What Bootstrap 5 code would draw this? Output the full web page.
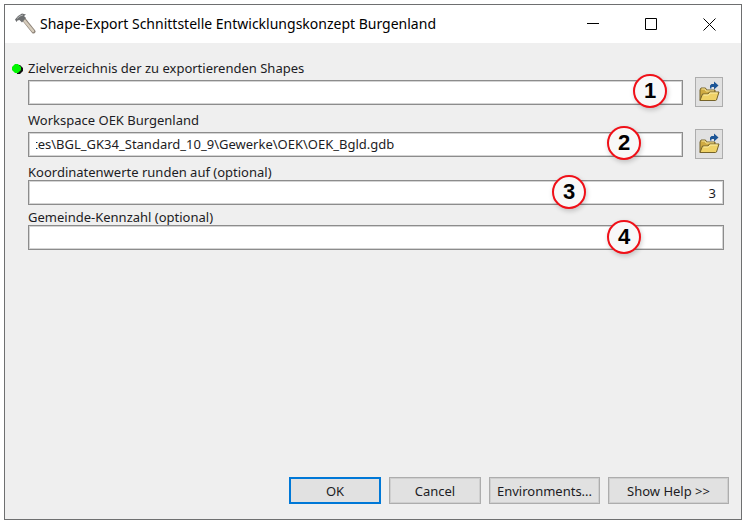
<!DOCTYPE html>
<html lang="de">
<head>
<meta charset="utf-8">
<meta name="viewport" content="width=device-width, initial-scale=1">
<title>Shape-Export Schnittstelle Entwicklungskonzept Burgenland</title>
<link href="https://cdn.jsdelivr.net/npm/bootstrap@5.3.0/dist/css/bootstrap.min.css" rel="stylesheet">
<style>
  body { font: 13px/18px "Noto Sans", sans-serif; color: #1c1c24; padding: 4px 2px 4px 4px; background: #fff; }
  .dialog { border: 1px solid #6e6f70; background: #efefef; }
  .titlebar { min-height: 38px; padding: 0 3px 0 9px; background: #fff; }
  .titlebar h1 { font: 14px/20px "Noto Sans", sans-serif; color: #000; }
  .win-btn { width: 58px; height: 38px; padding: 0; border: 0; border-radius: 0; }
  .win-btn svg { display: block; margin: 0 auto; }
  .form-area { padding: 16px 17px 0 23px; }
  .tight-label { line-height: 16px; padding-top: 2px; margin-top: 3px; }
  .low-label { line-height: 16px; padding-top: 4px; }
  .required-dot { left: -16px; top: 4px; width: 12px; height: 12px; }
  .field { height: 25px; padding: 0 7px; font-size: 13px; line-height: 20px; color: #1c1c24; background: #fff; border: 1px solid #8c8c8c; border-radius: 0; box-shadow: inset 0 0 0 1px #d4d4d4; }
  .field-path { text-indent: -3px; }
  .folder-btn { width: 28px; height: 30px; padding: 0; background: #e1e1e1; border: 1px solid #adadad; border-radius: 0; }
  .folder-btn svg { display: block; margin: 0 auto; }
  .with-folder { gap: 12px; margin-right: 1px; }
  .callout { width: 34px; height: 34px; top: 46%; transform: translateY(-50%); border: 2px solid #f01018; border-radius: 50%; background: #f8f8f8; color: #000; font: bold 22px/30px "Liberation Sans", Arial, sans-serif; text-align: center; box-shadow: 1px 2px 5px rgba(0,0,0,.2); pointer-events: none; }
  .callout-1 { right: 16px; } .callout-2 { right: 42px; } .callout-3 { right: 138px; } .callout-4 { right: 83px; }
  .actions { gap: 8px; padding: 0 12px 15px; }
  .action { width: 92px; height: 27px; padding: 0; font-size: 13px; line-height: 20px; color: #1c1c24; background: #e1e1e1; border: 1px solid #adadad; border-radius: 0; box-shadow: inset 0 0 0 1px #cfcfcf; }
  .action-default { border: 2px solid #0078d7; box-shadow: none; }
  .action-env { width: 111px; }
  .action-help { width: 121px; }
</style>
</head>
<body class="min-vh-100 d-flex">
<svg class="d-none" aria-hidden="true">
  <symbol id="folder" viewBox="0 0 22 22">
    <path d="M2 19.500V9l1-2h4.500l1 2H17v4" fill="#cfab42" stroke="#75632a"/>
    <path d="M3.500 8h3.500l1 2h8" fill="none" stroke="#f8e69a"/>
    <path d="M2 19.500 4.500 13H10l1.500-2h9.500L18.500 19l-1 .5z" fill="#efd267" stroke="#75632a"/>
    <path d="M5.500 14h5l1.500-2h7.500" fill="none" stroke="#fff0a8"/>
    <path d="M12 7.500V4.500l1.500-1.500H16V.5L20.500 4.500 16 8.500V6h-2.500v1.500z" fill="#1c5596"/>
  </symbol>
</svg>
<main class="dialog d-flex flex-column flex-grow-1">
  <header class="titlebar d-flex align-items-center">
    <svg width="22" height="22" viewBox="0 0 22 22" aria-hidden="true">
      <path d="M9.500 6 19.500 18.500" stroke="#8d8378" stroke-width="4" stroke-linecap="round"/>
      <path d="M9.500 6.500 19 18" stroke="#d6ccbc" stroke-width="2.500" stroke-linecap="round"/>
      <path d="M1 6.500 4 3l4-2.500 4 1-2 1.500 2 2-4 4.500-2.500-2.500-2 .5L2.500 9z" fill="#6d6f70"/>
      <path d="M3 5.500 6 3l3-1" fill="none" stroke="#b0b3b4"/>
    </svg>
    <h1 class="m-0 ms-1 flex-grow-1">Shape-Export Schnittstelle Entwicklungskonzept Burgenland</h1>
    <button class="btn win-btn" type="button" aria-label="Minimieren"><svg width="13" height="13" viewBox="0 0 13 13"><path d="M0 5.500h12" stroke="#000"/></svg></button>
    <button class="btn win-btn" type="button" aria-label="Maximieren"><svg width="13" height="13" viewBox="0 0 13 13"><path d="M.5.5h11v11H.5z" fill="none" stroke="#000"/></svg></button>
    <button class="btn win-btn" type="button" aria-label="Schließen"><svg width="13" height="13" viewBox="0 0 13 13"><path d="m.5.5 12 12m0-12-12 12" stroke="#000"/></svg></button>
  </header>
  <form class="d-flex flex-column flex-grow-1">
    <div class="form-area">
      <div class="position-relative">
        <svg class="required-dot position-absolute" viewBox="0 0 12 12" aria-hidden="true"><path d="M4 2h4l3 3v3l-3 3H5z" fill="#111"/><path d="M3 1h3l3 3v3l-3 3H3L0 7V4z" fill="#00f500"/></svg>
        <label class="d-block" for="target">Zielverzeichnis der zu exportierenden Shapes</label>
      </div>
      <div class="with-folder d-flex align-items-center">
        <div class="position-relative flex-grow-1">
          <input class="form-control field" id="target" type="text">
          <span class="callout callout-1 position-absolute">1</span>
        </div>
        <button class="btn folder-btn" type="button" aria-label="Zielverzeichnis wählen"><svg width="22" height="22"><use href="#folder"/></svg></button>
      </div>
      <label class="d-block mt-1" for="workspace">Workspace OEK Burgenland</label>
      <div class="with-folder d-flex align-items-center">
        <div class="position-relative flex-grow-1">
          <input class="form-control field field-path" id="workspace" type="text" value="tes\BGL_GK34_Standard_10_9\Gewerke\OEK\OEK_Bgld.gdb">
          <span class="callout callout-2 position-absolute">2</span>
        </div>
        <button class="btn folder-btn" type="button" aria-label="Workspace wählen"><svg width="22" height="22"><use href="#folder"/></svg></button>
      </div>
      <label class="d-block tight-label" for="digits">Koordinatenwerte runden auf (optional)</label>
      <div class="position-relative">
        <input class="form-control field text-end" id="digits" type="text" value="3">
        <span class="callout callout-3 position-absolute">3</span>
      </div>
      <label class="d-block low-label" for="code">Gemeinde-Kennzahl (optional)</label>
      <div class="position-relative">
        <input class="form-control field" id="code" type="text">
        <span class="callout callout-4 position-absolute">4</span>
      </div>
    </div>
    <div class="actions d-flex justify-content-end mt-auto">
      <button class="btn action action-default" type="submit">OK</button>
      <button class="btn action" type="button">Cancel</button>
      <button class="btn action action-env" type="button">Environments...</button>
      <button class="btn action action-help" type="button">Show Help &gt;&gt;</button>
    </div>
  </form>
</main>
<script src="https://cdn.jsdelivr.net/npm/bootstrap@5.3.0/dist/js/bootstrap.bundle.min.js"></script>
</body>
</html>
